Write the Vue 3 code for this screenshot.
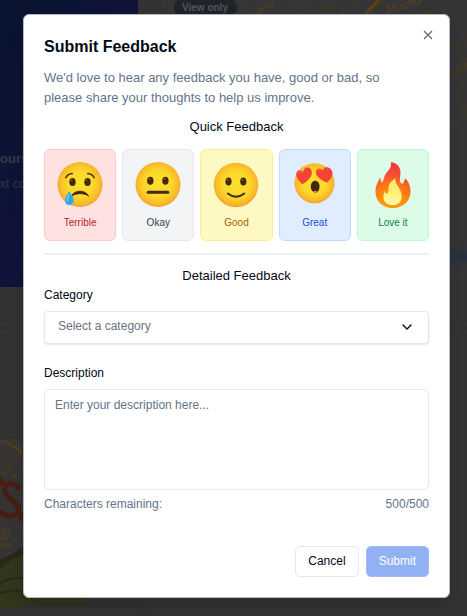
<script setup>
import { computed, ref } from 'vue'

const maxLength = 500
const rating = ref('')
const category = ref('')
const description = ref('')
const remaining = computed(() => maxLength - description.value.length)

const ratings = [
  { id: 'terrible', label: 'Terrible' },
  { id: 'okay', label: 'Okay' },
  { id: 'good', label: 'Good' },
  { id: 'great', label: 'Great' },
  { id: 'love', label: 'Love it' },
]
</script>

<template>
  <main class="screen">
    <svg class="scene" viewBox="0 0 467 616" preserveAspectRatio="xMinYMin slice" aria-hidden="true">
      <defs>
        <linearGradient id="hero" x1="0" y1="0" x2="1" y2="1">
          <stop offset="0" stop-color="#08142f" />
          <stop offset="0.5" stop-color="#10143a" />
          <stop offset="1" stop-color="#11102f" />
        </linearGradient>
      </defs>
      <rect width="467" height="616" fill="#333" />
      <rect width="138" height="287" fill="url(#hero)" />
      <rect x="163" width="304" height="282" fill="#353535" />
      <g fill="none" stroke="#493a1b" stroke-width="1">
        <path d="M240 4l6-4M290 0q11 6 12 14M301 0q7 4 9 8M342 13l17-13M342 13l8 2M371 13l12-13M374 0l8 3M438 11h7v4M423 14q4-4 9-1M320 2q3-4 8-1" />
        <ellipse cx="327" cy="10" rx="8" ry="5" />
        <path d="M323 12l2-4 2 3 3-4" />
        <path d="M450 42h6M450 47h10l7 18M452 78q8-10 15-9" />
        <path d="M452 75q8-9 15-9" stroke-width="2" />
        <circle cx="463" cy="82" r="2" />
        <path d="M456 92q8-5 8 1t-9 5M453 98v2M460 104h7M461 109h6M461 114h6M451 121l6 5M451 126l5-4M463 43l4-2" />
      </g>
      <path d="M366 13l13-13" fill="none" stroke="#5a4212" stroke-width="3" />
      <text x="387" y="14" transform="rotate(-17 387 14)" class="doodle">Mucho</text>
      <text x="255" y="18" transform="rotate(-33 255 18)" class="doodle small">sento</text>
      <rect x="174" y="-1" width="63" height="17" rx="8" fill="#202329" />
      <text x="182" y="11" class="badge">View only</text>
      <text x="0" y="163" class="hero-title">ours</text>
      <text x="0" y="188" class="hero-text">xt co</text>
      <rect x="440" y="248" width="40" height="17" fill="#303234" stroke="#28334b" />
      <text x="450" y="260" class="tag">clas</text>
      <path d="M0 328h467M0 605h142M144 600v16" stroke="#2c2c2c" />
      <path d="M0 439h15l8 7v159H0z" fill="#353432" />
      <path d="M0 577h86v28H0z" fill="#33351d" />
      <path d="M0 565q12-12 23-17v60H0z" fill="#33351d" />
      <path d="M0 559q12-3 23-13v9q-12 3-23 14z" fill="#26281a" />
      <path d="M0 583q14-7 23-4M0 593q13-4 23-1" fill="none" stroke="#26281a" stroke-width="2" />
      <g fill="none" stroke="#554319" stroke-width="1">
        <path d="M0 441q12 1 22 13M2 440q8 4 19 14M5 440l16 12M9 439l12 13M15 439l7 13M4 473l17-20M1 473h5M12 476l4-1v3zM0 530l6-2 3 2v7l-6 2-3-1M6 530v8M3 531v7M12 536l2 1M15 539l3 1M0 547l3-4 2 4 3-4 2 4 3-2" />
      </g>
      <path d="M20 489q-9-9-14-3c-5 7 4 12 10 18 6 7-1 13-8 12-4-1-6-3-8-5M0 478l3 7M23 512l-2 9" fill="none" stroke="#481c14" stroke-width="5" />
    </svg>

    <section class="dialog" role="dialog" aria-modal="true" aria-labelledby="dialog-title" aria-describedby="dialog-intro">
      <button class="close" type="button" aria-label="Close">
        <svg viewBox="0 0 10 10" aria-hidden="true"><path d="M1 1l8 8M9 1L1 9" /></svg>
      </button>

      <h1 id="dialog-title">Submit Feedback</h1>
      <p id="dialog-intro" class="intro">We'd love to hear any feedback you have, good or bad, so please share your thoughts to help us improve.</p>

      <h2 class="quick">Quick Feedback</h2>
      <div class="ratings">
        <button
          v-for="item in ratings"
          :key="item.id"
          type="button"
          class="rating"
          :class="item.id"
          :aria-pressed="rating === item.id"
          @click="rating = item.id"
        >
          <svg class="emoji" viewBox="0 0 46 46" aria-hidden="true">
            <defs>
              <radialGradient :id="'face-' + item.id" cx="0.5" cy="0.48" r="0.54">
                <stop offset="0" stop-color="#fde030" />
                <stop offset="0.55" stop-color="#fcd72b" />
                <stop offset="0.85" stop-color="#f9b928" />
                <stop offset="1" stop-color="#f19534" />
              </radialGradient>
            </defs>
            <g v-if="item.id === 'terrible'">
              <circle cx="23" cy="22.5" r="22.5" fill="url(#face-terrible)" />
              <ellipse cx="15.5" cy="20" rx="3.2" ry="4" fill="#422b0d" />
              <ellipse cx="30.5" cy="20" rx="3.2" ry="4" fill="#422b0d" />
              <circle cx="14.5" cy="18.3" r="0.9" fill="#896024" />
              <circle cx="29.5" cy="18.3" r="0.9" fill="#896024" />
              <path d="M8.8 15.6q2-3.6 6.5-4M37.2 15.6q-2-3.6-6.5-4" fill="none" stroke="#422b0d" stroke-width="1.5" stroke-linecap="round" />
              <path d="M14.6 34.2C17 27.5 29 27.5 31.6 34.2 28 30.8 18.5 30.8 14.6 34.2z" fill="#422b0d" stroke="#422b0d" stroke-width="0.8" stroke-linejoin="round" />
              <path d="M12.2 29.5Q8 35.5 8 38.8a4.3 4.3 0 0 0 8.6 0Q16.6 35 12.2 29.5z" fill="#29a8f1" />
              <path d="M12 33q-2 3-1.6 6" fill="none" stroke="#72cef9" stroke-width="1.3" stroke-linecap="round" />
            </g>
            <g v-else-if="item.id === 'okay'">
              <circle cx="23" cy="22.5" r="22.5" fill="url(#face-okay)" />
              <ellipse cx="15.3" cy="18.7" rx="3.2" ry="4" fill="#422b0d" />
              <ellipse cx="30.4" cy="18.7" rx="3.2" ry="4" fill="#422b0d" />
              <circle cx="14.4" cy="17" r="0.9" fill="#896024" />
              <circle cx="29.4" cy="17" r="0.9" fill="#896024" />
              <path d="M13.2 30.3h19.6" stroke="#422b0d" stroke-width="3" stroke-linecap="round" />
            </g>
            <g v-else-if="item.id === 'good'">
              <circle cx="23" cy="23" r="22.2" fill="url(#face-good)" />
              <ellipse cx="15.5" cy="19.5" rx="3.1" ry="4" fill="#422b0d" />
              <ellipse cx="30.3" cy="19.5" rx="3.1" ry="4" fill="#422b0d" />
              <circle cx="14.6" cy="17.8" r="0.9" fill="#896024" />
              <circle cx="29.4" cy="17.8" r="0.9" fill="#896024" />
              <path d="M14.8 31.5Q23 38 31.3 31.5" fill="none" stroke="#422b0d" stroke-width="1.9" stroke-linecap="round" />
            </g>
            <g v-else-if="item.id === 'great'">
              <circle cx="22.5" cy="21.2" r="20" fill="url(#face-great)" />
              <path d="M10.5 22.3C6 18.3 3.8 14.2 4.3 11.2c.5-3.3 5.2-4.2 7-.8 0-4.4 4.2-6 6.8-3.8C22.7 10.8 18 18.2 10.5 22.3z" fill="#f44336" />
              <path d="M34.8 20.5c-7.6-3.3-11.5-7-10.9-11 .7-3.5 5-4.3 7-.9.7-4.2 5.3-4.3 7.8-1.6 3.8 4.2 1.2 9.5-3.9 13.5z" fill="#f44336" />
              <path d="M6 12q1-3 3.5-2M26 9q1-3 3-1" fill="none" stroke="#f96b57" stroke-width="1" stroke-linecap="round" />
              <path d="M23.2 18.8c2.4 0 4.3 2.3 4.3 5.4 0 3.3-1.5 6.4-3.9 6.4-2.8 0-4.8-2.6-4.8-6 0-3.2 1.8-5.8 4.4-5.8z" fill="#422b0d" />
              <path d="M21 29.6q2.2-1.4 4.6-.3-1 1.5-2.2 1.4-1.2 0-2.4-1.1z" fill="#ef7a78" />
            </g>
            <g v-else>
              <defs>
                <radialGradient id="flame" gradientUnits="userSpaceOnUse" cx="21" cy="45" r="42">
                  <stop offset="0.2" stop-color="#ff9800" />
                  <stop offset="0.5" stop-color="#ff7d12" />
                  <stop offset="0.78" stop-color="#f54c32" />
                  <stop offset="1" stop-color="#f03a3c" />
                </radialGradient>
                <linearGradient id="flame-core" x1="0" y1="0" x2="0" y2="1">
                  <stop offset="0" stop-color="#ffe36a" />
                  <stop offset="0.55" stop-color="#fff176" />
                  <stop offset="1" stop-color="#fff9b0" />
                </linearGradient>
              </defs>
              <path d="M20.8.2c6 .4 9.8 5 9.7 10.2-.1 4.5-1.2 6.8-.2 9.8.8 2 2.8 1.6 3.6-.3.6-1.4.5-2.7 1.3-3.5 4 3.2 5.4 8.7 5.3 13.6C40.3 39.2 33 46 22.8 46 12.5 46 5.5 39 5.5 29.7c0-7.2 3.3-10.6 4.7-14.4.3 2 .4 4.2 1.6 5 1.8.1 1.4-4.5 3.9-8.4 2.7-4.1 6-5.4 5.1-11.7z" fill="url(#flame)" />
              <path d="M25.4 16c-1 6.3 5.5 9.3 6.2 17.3.5 6.4-3.3 10-8.7 10-6 0-9.7-3.7-9.5-9 .1-2.3.7-4.2 1.2-5.3.5 1.5 1.2 2.7 2.3 2.5 2.5-.5.4-6.5 3.1-10.4 1.3-2 3.2-3 5.4-5.1z" fill="url(#flame-core)" />
            </g>
          </svg>
          <span>{{ item.label }}</span>
        </button>
      </div>

      <hr class="divider" />

      <form @submit.prevent>
        <h2 class="detailed">Detailed Feedback</h2>
        <label for="category">Category</label>
        <div class="select-wrap">
          <select id="category" v-model="category">
            <option value="" disabled>Select a category</option>
            <option value="bug">Bug</option>
            <option value="feature">Feature</option>
            <option value="other">Other</option>
          </select>
          <svg class="chevron" viewBox="0 0 12 8" aria-hidden="true"><path d="M2 2l4 4 4-4" /></svg>
        </div>

        <label class="description-label" for="description">Description</label>
        <textarea
          id="description"
          v-model="description"
          :maxlength="maxLength"
          placeholder="Enter your description here..."
        ></textarea>
        <div class="counter">
          <span>Characters remaining:</span>
          <span>{{ remaining }}/{{ maxLength }}</span>
        </div>

        <div class="actions">
          <button class="action" type="button">Cancel</button>
          <button class="action submit" type="submit" disabled>Submit</button>
        </div>
      </form>
    </section>
  </main>
</template>

<style>
body {
  margin: 0;
  background: #333;
}
</style>

<style scoped>
* {
  box-sizing: border-box;
}

.screen {
  position: relative;
  min-height: 100vh;
  padding: 14px 17px 18px 23px;
  overflow: hidden;
  font-family: "Liberation Sans", Arial, sans-serif;
  font-size: 12px;
  line-height: 18px;
  color: #020817;
}

.scene {
  position: absolute;
  inset: 0;
  width: 100%;
  height: 100%;
}

.doodle {
  font: italic 12px "Liberation Sans", sans-serif;
  fill: #54431c;
}

.small {
  font-size: 10px;
}

.badge {
  font: bold 10px "Liberation Sans", sans-serif;
  fill: #555;
}

.hero-title {
  font: bold 13px "Liberation Sans", sans-serif;
  fill: #383a48;
}

.hero-text {
  font: 12px "Liberation Sans", sans-serif;
  fill: #343647;
}

.tag {
  font: 10px "Liberation Sans", sans-serif;
  fill: #1b2b60;
}

.dialog {
  position: relative;
  max-width: 512px;
  margin: 0 auto;
  padding: 20px;
  border: 1px solid #b4b9c2;
  border-radius: 6px;
  background: #fff;
  box-shadow: 0 8px 16px rgba(0, 0, 0, 0.15);
}

.close {
  position: absolute;
  top: 12px;
  right: 13px;
  display: grid;
  place-items: center;
  width: 16px;
  height: 16px;
  padding: 0;
  border: 0;
  background: none;
}

.close svg {
  width: 10px;
  height: 10px;
  fill: none;
  stroke: #626570;
  stroke-width: 1.2;
}

h1,
h2,
p {
  margin: 0;
}

h1 {
  padding-top: 1px;
  font-size: 16px;
  line-height: 22px;
  font-weight: 700;
}

.intro {
  margin-top: 10px;
  padding-right: 32px;
  font-size: 13px;
  line-height: 20px;
  color: #64748b;
}

h2 {
  font-size: 13px;
  line-height: 20px;
  font-weight: 400;
  text-align: center;
}

.quick {
  margin-top: 9px;
}

.ratings {
  display: grid;
  grid-template-columns: repeat(5, 1fr);
  gap: 6px;
  margin-top: 12px;
}

.rating {
  display: flex;
  flex-direction: column;
  align-items: center;
  gap: 8px;
  min-width: 0;
  padding: 12px 4px 10px;
  border: 1px solid;
  border-radius: 6px;
  font-family: inherit;
  font-size: 10px;
  line-height: 14px;
}

.emoji {
  width: 46px;
  height: 46px;
}

.terrible {
  border-color: #fecaca;
  background: #fee2e2;
  color: #b91c1c;
}

.okay {
  border-color: #e5e7eb;
  background: #f3f4f6;
  color: #374151;
}

.good {
  border-color: #fef08a;
  background: #fef9c3;
  color: #a16207;
}

.great {
  border-color: #bfdbfe;
  background: #e0edff;
  color: #1d4ed8;
}

.love {
  border-color: #bbf7d0;
  background: #dcfce7;
  color: #15803d;
}

.divider {
  height: 2px;
  margin: 12px 0 11px;
  border: 0;
  background: #edf1f7;
}

label {
  display: block;
}

.select-wrap {
  position: relative;
  margin-top: 7px;
}

select {
  display: block;
  width: 100%;
  height: 33px;
  padding: 0 32px 4px 13px;
  border: 1px solid #e2e8f0;
  border-radius: 4px;
  background: #fff;
  box-shadow: 0 1px 2px rgba(15, 23, 42, 0.1);
  font: inherit;
  color: #6b7280;
  appearance: none;
}

.chevron {
  position: absolute;
  top: 12px;
  right: 16px;
  width: 12px;
  height: 8px;
  fill: none;
  stroke: #020817;
  stroke-width: 1.4;
  stroke-linecap: round;
  stroke-linejoin: round;
  pointer-events: none;
}

.description-label {
  margin-top: 20px;
}

textarea {
  display: block;
  width: 100%;
  height: 101px;
  margin-top: 7px;
  padding: 6px 10px;
  border: 1px solid #e2e8f0;
  border-radius: 5px;
  background: #fff;
  font: inherit;
  color: #020817;
  resize: none;
}

textarea::placeholder {
  color: #64748b;
  opacity: 1;
}

.counter {
  display: flex;
  justify-content: space-between;
  margin-top: 5px;
  color: #64748b;
}

.actions {
  display: flex;
  justify-content: flex-end;
  gap: 7px;
  margin-top: 33px;
}

.action {
  height: 31px;
  padding: 0 12px 2px;
  border: 1px solid #e2e8f0;
  border-radius: 5px;
  background: #fff;
  font: inherit;
  color: #020817;
}

.submit {
  border-color: #a3b9f4;
  background: #92b1f5;
  color: #fff;
}
</style>
